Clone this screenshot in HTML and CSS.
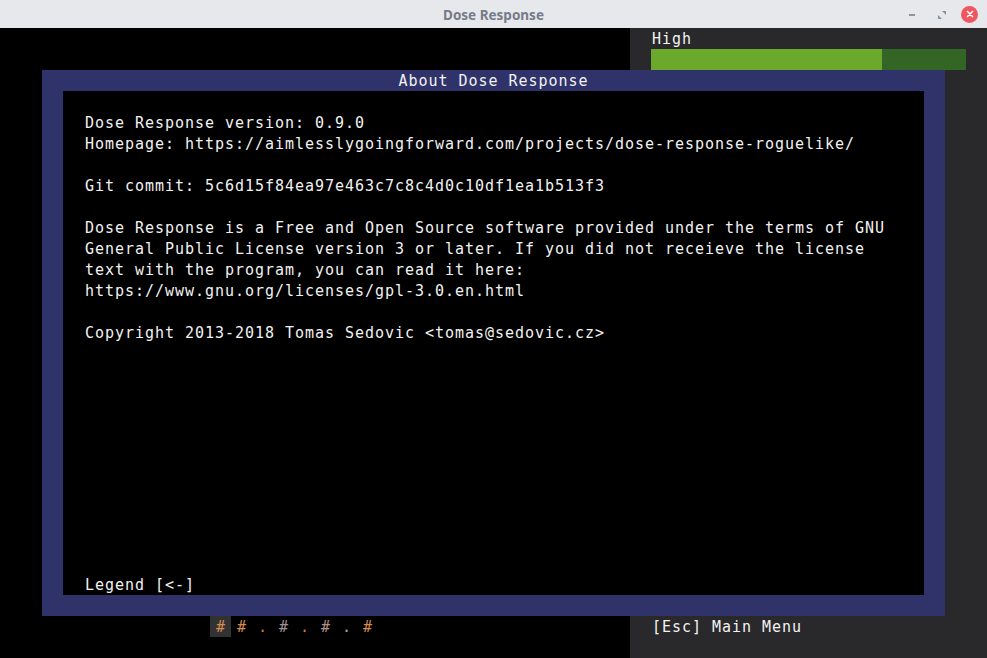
FILE: index.html
```html
<!DOCTYPE html>
<html>
<head>
<meta charset="utf-8">
<link rel="stylesheet" href="styles.css">
</head>
<body>
<div class="window">
  <header class="titlebar">
    <div class="title">Dose Response</div>
    <div class="controls">
      <span class="btn-min"></span>
      <svg class="btn-max" width="10" height="10" viewBox="0 0 10 10"><path d="M5 1h4v4z M1 5v4h4z" fill="#8d9199"/></svg>
      <span class="btn-close"><svg width="8" height="8" viewBox="0 0 8 8"><path d="M1.5 1.5l5 5M6.5 1.5l-5 5" stroke="#fff" stroke-width="1.6" stroke-linecap="round"/></svg></span>
    </div>
  </header>
  <main class="content">
    <section class="game">
      <div class="map-row">
        <span class="cell hl wall-o">#</span>
        <span class="cell wall-o">#</span>
        <span class="cell floor-o">.</span>
        <span class="cell wall-g">#</span>
        <span class="cell floor-o">.</span>
        <span class="cell wall-p">#</span>
        <span class="cell floor-g">.</span>
        <span class="cell wall-o">#</span>
      </div>
    </section>
    <aside class="sidebar">
      <div class="mono label">High</div>
      <div class="bar"><div class="bar-fill"></div></div>
      <div class="spacer"></div>
      <div class="mono label">[Esc] Main Menu</div>
    </aside>
    <div class="dialog">
      <div class="dialog-title mono">About Dose Response</div>
      <div class="dialog-body mono">
        <div class="text">Dose Response version: 0.9.0
Homepage: https://aimlesslygoingforward.com/projects/dose-response-roguelike/

Git commit: 5c6d15f84ea97e463c7c8c4d0c10df1ea1b513f3

Dose Response is a Free and Open Source software provided under the terms of GNU
General Public License version 3 or later. If you did not receieve the license
text with the program, you can read it here:
https://www.gnu.org/licenses/gpl-3.0.en.html

Copyright 2013-2018 Tomas Sedovic &lt;tomas@sedovic.cz&gt;</div>
        <div class="legend">Legend [&lt;-]</div>
      </div>
    </div>
  </main>
</div>
</body>
</html>
```
FILE: styles.css
```css
html, body {
  margin: 0;
  padding: 0;
  background: #000;
}
.window {
  width: 987px;
  height: 658px;
  display: flex;
  flex-direction: column;
  overflow: hidden;
}
.titlebar {
  height: 28px;
  flex: 0 0 28px;
  box-sizing: border-box;
  padding-top: 2px;
  background: #e7e8eb;
  position: relative;
  display: flex;
  align-items: center;
  justify-content: center;
}
.title {
  font-family: "Noto Sans", sans-serif;
  font-weight: 700;
  font-size: 13.5px;
  color: #767b8a;
  letter-spacing: 0;
}
.controls {
  position: absolute;
  right: 9px;
  top: 0;
  height: 28px;
  display: flex;
  align-items: center;
  gap: 0;
}
.btn-min {
  width: 6px;
  height: 2px;
  background: #8d9199;
  margin-right: 22px;
  margin-top: 1px;
}
.btn-max {
  margin-right: 14px;
  margin-top: 1px;
}
.btn-close {
  width: 17px;
  height: 17px;
  border-radius: 50%;
  background: #ef5660;
  display: flex;
  align-items: center;
  justify-content: center;
}
.content {
  flex: 1;
  display: flex;
  position: relative;
}
.mono {
  font-family: "DejaVu Sans Mono", monospace;
  font-size: 15px;
  line-height: 21px;
  letter-spacing: 0.97px;
  color: #f2f2f2;
}
.game {
  width: 630px;
  flex: 0 0 630px;
  background: #000;
  display: flex;
  flex-direction: column;
  justify-content: flex-end;
  padding-bottom: 21px;
  box-sizing: border-box;
}
.map-row {
  display: flex;
  padding-left: 210px;
  height: 21px;
}
.cell {
  width: 21px;
  height: 21px;
  box-sizing: border-box;
  padding-top: 1px;
  display: flex;
  align-items: center;
  justify-content: center;
  font-family: "DejaVu Sans Mono", monospace;
  font-size: 15px;
  line-height: 21px;
}
.hl { background: #333232; }
.wall-o { color: #d58a4f; }
.wall-g { color: #a19194; }
.wall-p { color: #b39183; }
.floor-o { color: #d77a25; }
.floor-g { color: #a9a4ab; }
.sidebar {
  flex: 1;
  background: #29282b;
  display: flex;
  flex-direction: column;
  padding: 0 21px 21px 21px;
}
.label {
  height: 21px;
  box-sizing: border-box;
  padding: 1px 0 0 1px;
  white-space: nowrap;
}
.bar {
  height: 21px;
  background: #336524;
}
.bar-fill {
  width: 231px;
  height: 21px;
  background: #6aa92c;
}
.spacer { flex: 1; }
.dialog {
  position: absolute;
  left: 42px;
  top: 42px;
  width: 903px;
  height: 546px;
  box-sizing: border-box;
  background: #2f3369;
  padding: 21px;
  display: flex;
  flex-direction: column;
}
.dialog-title {
  position: absolute;
  top: 1px;
  left: 0;
  right: 0;
  height: 21px;
  text-align: center;
  color: #f2f2f2;
}
.dialog-body {
  flex: 1;
  background: #000;
  padding: 22px 21px 0 22px;
  display: flex;
  flex-direction: column;
}
.text {
  white-space: pre;
  flex: 1;
}
.legend {
  height: 20px;
  white-space: nowrap;
}
```
